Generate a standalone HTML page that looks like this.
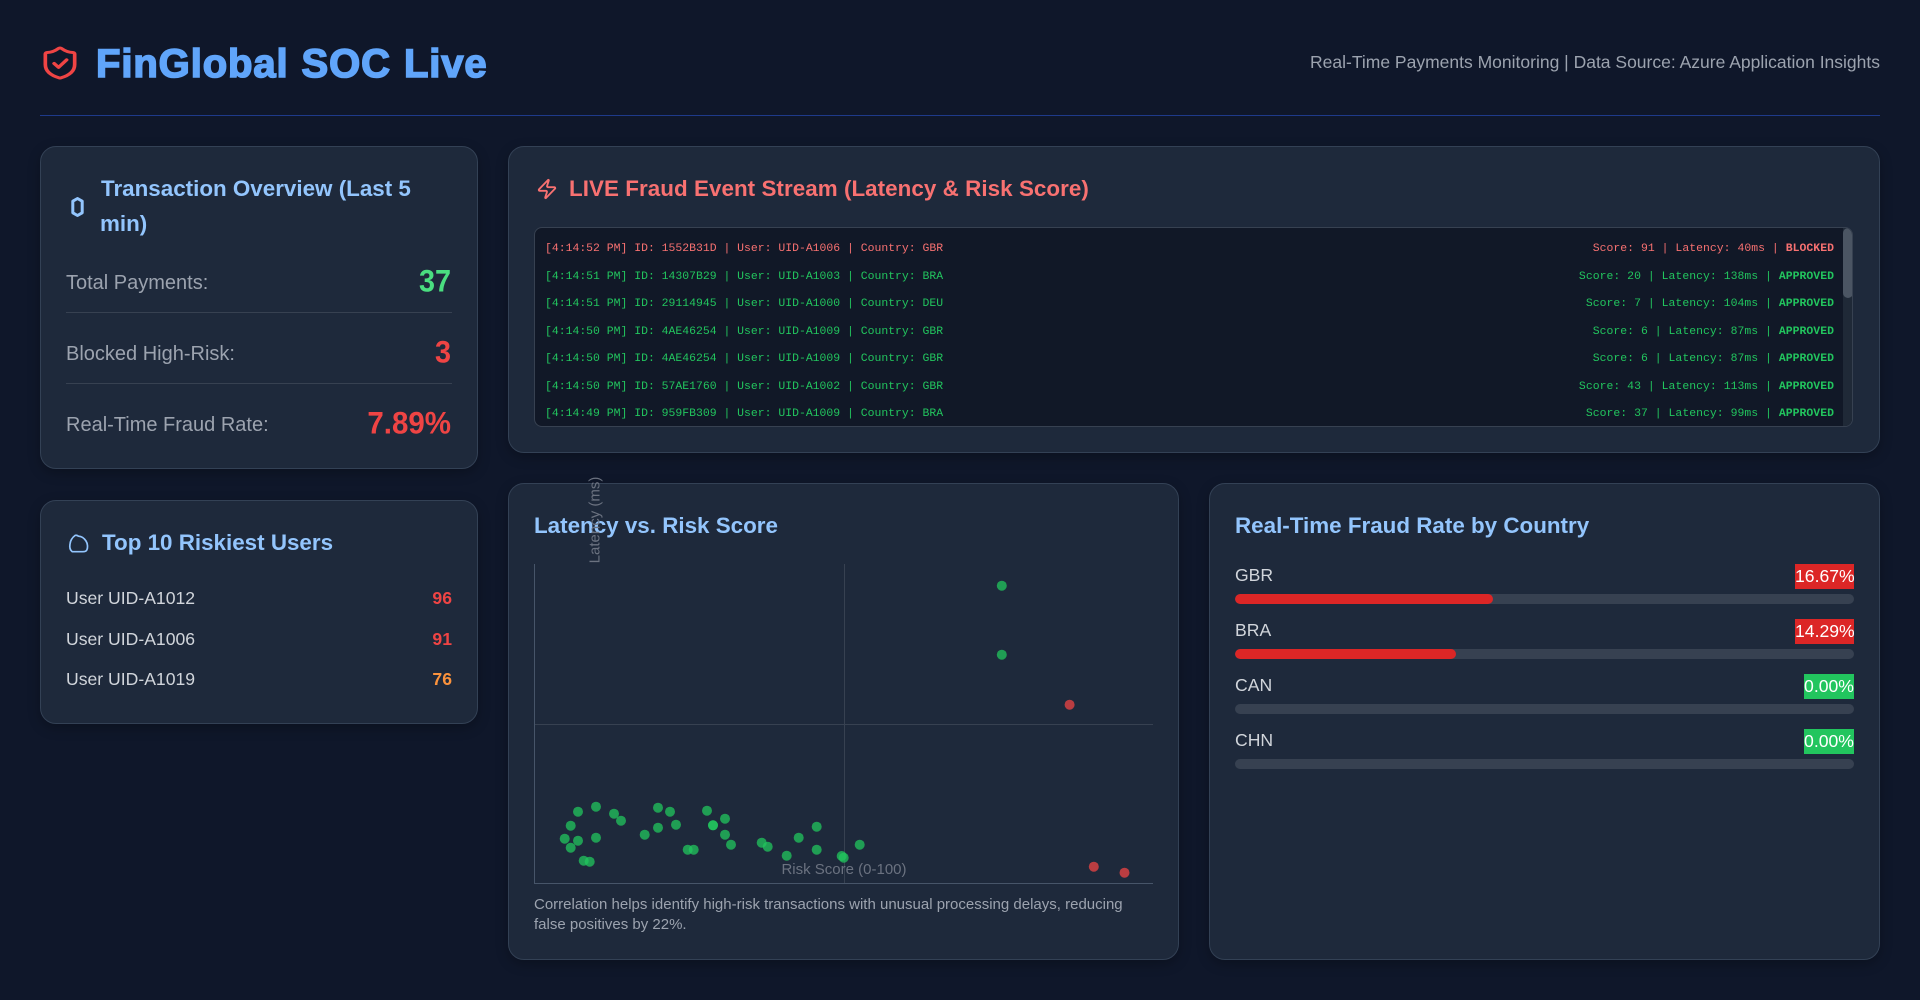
<!DOCTYPE html>
<html lang="en"><head><meta charset="utf-8"><title>FinGlobal SOC Live</title>
<style>
*{box-sizing:border-box;margin:0;padding:0}
html,body{width:1920px;height:1000px;overflow:hidden;background:#0f172a}
body{position:relative;font-family:"Liberation Sans",Arial,sans-serif;color:#d1d5db}
.a{position:absolute;white-space:nowrap}
.card{position:absolute;background:#1e293b;border:1px solid #334155;border-radius:16px;box-shadow:0 4px 12px rgba(0,0,0,.25)}
.t{font-size:22.4px;font-weight:700;color:#93c5fd;line-height:35px}
.lab{font-size:20px;color:#9ca3af;line-height:30px;left:66px}
.val{font-weight:700;line-height:40px;right:1469px;transform:scaleY(1.08)}
.hr{position:absolute;left:66px;width:386px;height:1px;background:#374151}
.u{left:66px;font-size:17.6px;line-height:28px;color:#d1d5db}
.s{right:1468px;font-size:17.6px;line-height:28px;font-weight:700}
.log{position:absolute;left:534px;top:227px;width:1319px;height:200px;background:#111827;border:1px solid #374151;border-radius:8px;overflow:hidden}
.r{position:absolute;left:10px;width:1289px;height:20px;font:11.44px/20px "Liberation Mono",monospace;color:#22c55e;white-space:nowrap}
.r i{font-style:normal;position:absolute;left:0}
.r span{position:absolute;right:0;letter-spacing:.03px}
.r.b{color:#f87171}
.sb{position:absolute;right:-1px;top:0;width:10px;height:200px;background:#1f2937}
.th{position:absolute;right:0;top:0;width:10px;height:70px;background:#4b5563;border-radius:5px}
.c{left:1235px;font-size:17.6px;line-height:25px;color:#d1d5db}
.tag{position:absolute;right:66px;height:25px;line-height:24px;font-size:17.6px;color:#fff;text-align:center}
.bar{position:absolute;left:1235px;width:619px;height:10px;border-radius:5px;background:#374151;overflow:hidden}
.bar div{height:10px;background:#dc2626;border-radius:5px}
</style></head><body>

<svg class="a" style="left:38px;top:45px" width="44" height="36" viewBox="0 0 24 24" preserveAspectRatio="none" fill="none" stroke="#ef4444" stroke-width="2" stroke-linecap="round" stroke-linejoin="round"><path d="M20 13c0 5-3.500 7.500-7.660 8.950a1 1 0 0 1-.67-.01C7.500 20.500 4 18 4 13V6a1 1 0 0 1 1-1c2 0 4.500-1.200 6.240-2.720a1.170 1.170 0 0 1 1.520 0C14.510 3.810 17 5 19 5a1 1 0 0 1 1 1z"/><path d="m8.800 12.300 2.400 2.600 4.400-5"/></svg>
<div class="a" style="left:96px;top:39px;font-size:40px;line-height:50px;font-weight:700;color:#60a5fa;letter-spacing:.9px;word-spacing:1px;-webkit-text-stroke:1.6px #60a5fa">FinGlobal SOC Live</div>
<div class="a" style="right:40px;top:48px;font-size:17.5px;line-height:28px;color:#9ca3af">Real-Time Payments Monitoring | Data Source: Azure Application Insights</div>
<div class="a" style="left:40px;top:115px;width:1840px;height:1px;background:#1e3a8a"></div>

<div class="card" style="left:40px;top:146px;width:438px;height:323px"></div>
<svg class="a" style="left:70px;top:196px" width="15" height="22" viewBox="0 0 15 22" fill="none" stroke="#93c5fd" stroke-width="3" stroke-linejoin="round"><path d="M7.500 2.500 12.200 5.200V16.800L7.500 19.500 2.800 16.800V5.200Z"/></svg>
<div class="a t" style="left:101px;top:171px">Transaction Overview (Last 5</div>
<div class="a t" style="left:100px;top:206px">min)</div>
<div class="a lab" style="top:267.500px">Total Payments:</div>
<div class="a val" style="top:262px;font-size:28.800px;color:#4ade80">37</div>
<div class="hr" style="top:312px"></div>
<div class="a lab" style="top:338.500px">Blocked High-Risk:</div>
<div class="a val" style="top:333px;font-size:28.800px;color:#ef4444">3</div>
<div class="hr" style="top:383px"></div>
<div class="a lab" style="top:409.500px">Real-Time Fraud Rate:</div>
<div class="a val" style="top:404px;font-size:29.500px;color:#ef4444">7.89%</div>

<div class="card" style="left:40px;top:500px;width:438px;height:224px"></div>
<svg class="a" style="left:67px;top:532px" width="23" height="24" viewBox="0 0 23 24" fill="none" stroke="#93c5fd" stroke-width="1.700" stroke-linejoin="round"><path d="M5 19.500C3 18 2.500 15 3 12 3.500 8 6 5 8 3.500 9.500 2.800 10.500 3.500 11.500 4.200 14 4.300 17 6 19 9 21 12 20.800 16 19.800 18 19 19.500 18 19.700 16 19.700H7C6 19.700 5.500 19.800 5 19.500Z"/></svg>
<div class="a t" style="left:102px;top:525px">Top 10 Riskiest Users</div>
<div class="a u" style="top:583.500px">User UID-A1012</div><div class="a s" style="top:583.500px;color:#ef4444">96</div>
<div class="a u" style="top:624.500px">User UID-A1006</div><div class="a s" style="top:624.500px;color:#ef4444">91</div>
<div class="a u" style="top:665px">User UID-A1019</div><div class="a s" style="top:665px;color:#fb923c">76</div>

<div class="card" style="left:508px;top:146px;width:1372px;height:307px"></div>
<svg class="a" style="left:535.500px;top:178px" width="22" height="22" viewBox="0 0 24 24" fill="none" stroke="#f87171" stroke-width="2" stroke-linecap="round" stroke-linejoin="round"><path d="M4 14a1 1 0 0 1-.78-1.630l9.900-10.200a.5.5 0 0 1 .86.46l-1.920 6.020A1 1 0 0 0 13 10h7a1 1 0 0 1 .78 1.630l-9.900 10.200a.5.5 0 0 1-.86-.46l1.920-6.020A1 1 0 0 0 11 14z"/></svg>
<div class="a t" style="left:569px;top:171px;color:#f87171;letter-spacing:.05px">LIVE Fraud Event Stream (Latency &amp; Risk Score)</div>
<div class="log">
<div class="r b" style="top:11px"><i>[4:14:52 PM] ID: 1552B31D | User: UID-A1006 | Country: GBR</i><span>Score: 91 | Latency: 40ms | <b>BLOCKED</b></span></div>
<div class="r" style="top:39px"><i>[4:14:51 PM] ID: 14307B29 | User: UID-A1003 | Country: BRA</i><span>Score: 20 | Latency: 138ms | <b>APPROVED</b></span></div>
<div class="r" style="top:66px"><i>[4:14:51 PM] ID: 29114945 | User: UID-A1000 | Country: DEU</i><span>Score: 7 | Latency: 104ms | <b>APPROVED</b></span></div>
<div class="r" style="top:94px"><i>[4:14:50 PM] ID: 4AE46254 | User: UID-A1009 | Country: GBR</i><span>Score: 6 | Latency: 87ms | <b>APPROVED</b></span></div>
<div class="r" style="top:121px"><i>[4:14:50 PM] ID: 4AE46254 | User: UID-A1009 | Country: GBR</i><span>Score: 6 | Latency: 87ms | <b>APPROVED</b></span></div>
<div class="r" style="top:149px"><i>[4:14:50 PM] ID: 57AE1760 | User: UID-A1002 | Country: GBR</i><span>Score: 43 | Latency: 113ms | <b>APPROVED</b></span></div>
<div class="r" style="top:176px"><i>[4:14:49 PM] ID: 959FB309 | User: UID-A1009 | Country: BRA</i><span>Score: 37 | Latency: 99ms | <b>APPROVED</b></span></div>
<div class="sb"><div class="th"></div></div>
</div>

<div class="card" style="left:508px;top:483px;width:671px;height:477px"></div>
<div class="a t" style="left:534px;top:508px">Latency vs. Risk Score</div>
<svg class="a" style="left:500px;top:470px" width="700" height="430" viewBox="500 470 700 430">
<g stroke="#374151" stroke-width="1"><line x1="844.500" y1="564" x2="844.500" y2="883"/><line x1="534" y1="724.500" x2="1153" y2="724.500"/></g>
<g stroke="#475569" stroke-width="1"><line x1="534.500" y1="564" x2="534.500" y2="883"/><line x1="534" y1="883.500" x2="1153" y2="883.500"/></g>
<g fill="#22c55e" fill-opacity=".75">
<circle cx="578" cy="811.700" r="5"/><circle cx="596" cy="806.700" r="5"/><circle cx="614" cy="813.700" r="5"/><circle cx="621" cy="820.700" r="5"/><circle cx="570.700" cy="825.700" r="5"/><circle cx="564.700" cy="838.700" r="5"/><circle cx="578" cy="840.700" r="5"/><circle cx="570.700" cy="847.700" r="5"/><circle cx="596" cy="837.700" r="5"/><circle cx="583.700" cy="860.700" r="5"/><circle cx="589.700" cy="861.700" r="5"/>
<circle cx="658" cy="807.700" r="5"/><circle cx="670" cy="811.700" r="5"/><circle cx="676" cy="824.700" r="5"/><circle cx="658" cy="827.700" r="5"/><circle cx="644.700" cy="834.700" r="5"/><circle cx="687.700" cy="849.700" r="5"/><circle cx="693.700" cy="849.700" r="5"/>
<circle cx="707" cy="810.700" r="5"/><circle cx="725" cy="818.700" r="5"/><circle cx="713" cy="825.300" r="5"/><circle cx="713" cy="825.300" r="5"/><circle cx="725" cy="834.700" r="5"/><circle cx="731" cy="844.700" r="5"/><circle cx="761.700" cy="842.700" r="5"/><circle cx="767.700" cy="846.700" r="5"/><circle cx="786.700" cy="855.700" r="5"/><circle cx="798.700" cy="837.700" r="5"/><circle cx="816.700" cy="826.700" r="5"/><circle cx="816.700" cy="849.700" r="5"/><circle cx="841.700" cy="856" r="5"/><circle cx="843.700" cy="857.700" r="5"/><circle cx="859.700" cy="844.700" r="5"/>
<circle cx="1001.800" cy="585.700" r="5"/><circle cx="1001.800" cy="654.700" r="5"/></g>
<g fill="#ef4444" fill-opacity=".75"><circle cx="1069.600" cy="704.700" r="5"/><circle cx="1093.800" cy="866.700" r="5"/><circle cx="1124.500" cy="872.700" r="5"/></g>
<text x="844" y="874" text-anchor="middle" font-family="Liberation Sans, Arial, sans-serif" font-size="15" fill="#6b7280">Risk Score (0-100)</text>
<text transform="translate(599.500 520) rotate(-90)" text-anchor="middle" font-family="Liberation Sans, Arial, sans-serif" font-size="15" fill="#6b7280">Latency (ms)</text>
</svg>
<div class="a" style="left:534px;top:895px;font-size:15px;line-height:20px;color:#9ca3af">Correlation helps identify high-risk transactions with unusual processing delays, reducing<br>false positives by 22%.</div>

<div class="card" style="left:1209px;top:483px;width:671px;height:477px"></div>
<div class="a t" style="left:1235px;top:508px">Real-Time Fraud Rate by Country</div>
<div class="a c" style="top:563px">GBR</div><div class="tag" style="top:564px;width:59px;background:#dc2626">16.67%</div>
<div class="bar" style="top:594px"><div style="width:258px"></div></div>
<div class="a c" style="top:618px">BRA</div><div class="tag" style="top:619px;width:59px;background:#dc2626">14.29%</div>
<div class="bar" style="top:649px"><div style="width:221px"></div></div>
<div class="a c" style="top:673px">CAN</div><div class="tag" style="top:674px;width:50px;background:#22c55e">0.00%</div>
<div class="bar" style="top:704px"></div>
<div class="a c" style="top:728px">CHN</div><div class="tag" style="top:729px;width:50px;background:#22c55e">0.00%</div>
<div class="bar" style="top:759px"></div>
</body></html>
